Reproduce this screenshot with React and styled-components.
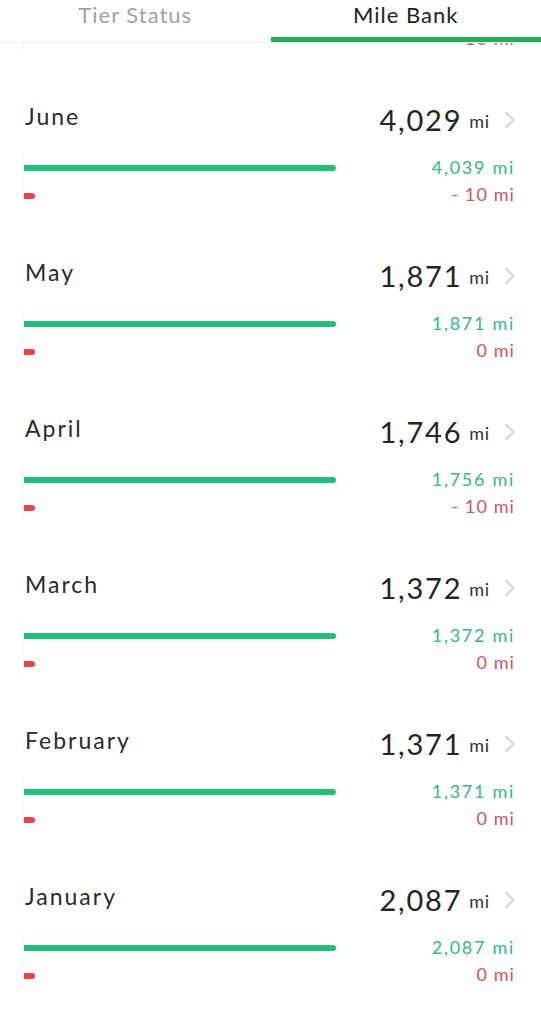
import React from "react";
import styled, { createGlobalStyle } from "styled-components";

const GlobalStyle = createGlobalStyle`
  html, body {
    margin: 0;
    padding: 0;
    background: #ffffff;
    font-family: "Lato", "Liberation Sans", sans-serif;
  }
`;

const Page = styled.div`
  width: 541px;
  height: 1024px;
  overflow: hidden;
  background: #fff;
`;

const TabBar = styled.div`
  position: sticky;
  top: 0;
  z-index: 2;
  display: flex;
  height: 42px;
  background: #fff;
  border-bottom: 1px solid #f3f3f3;
`;

const Tab = styled.div`
  flex: 1;
  display: flex;
  justify-content: center;
  padding-top: 1px;
  font-size: 22px;
  letter-spacing: 1px;
  color: ${p => (p.active ? "#222" : "#a2a2a2")};
  position: relative;
  &::after {
    content: "";
    display: ${p => (p.active ? "block" : "none")};
    position: absolute;
    left: 0;
    right: 0;
    bottom: 0;
    height: 5px;
    background: #1faf55;
  }
`;

const List = styled.div`
  margin-top: -111px;
`;

const Row = styled.div`
  height: 156px;
  padding: 0 25px 0 24px;
  box-sizing: border-box;
`;

const Head = styled.div`
  display: flex;
  align-items: center;
  justify-content: space-between;
  height: 66px;
`;

const Month = styled.div`
  font-size: 23px;
  letter-spacing: 2px;
  color: #2a2a2a;
  margin-top: -10px;
  margin-left: 1px;
`;

const Total = styled.div`
  display: flex;
  align-items: center;
  color: #242424;
  margin-top: -4px;
`;

const Big = styled.span`
  font-size: 29px;
  letter-spacing: 1.8px;
`;

const Unit = styled.span`
  font-size: 18px;
  letter-spacing: 0.8px;
  margin-left: 7px;
  margin-top: 4px;
  color: #333;
`;

const Chevron = styled.svg`
  width: 12px;
  height: 18px;
  margin-left: 14px;
  margin-top: 2px;
`;

const Chart = styled.div`
  display: flex;
  flex-direction: column;
  gap: 2px;
`;

const Line = styled.div`
  display: flex;
  align-items: center;
  justify-content: space-between;
  height: 25px;
`;

const Track = styled.div`
  width: 312px;
  height: 25px;
  display: flex;
  align-items: center;
  border-left: 1px solid #f5f5f5;
  margin-left: -1px;
`;

const Bar = styled.div`
  height: 6px;
  border-radius: 0 3px 3px 0;
  background: ${p => p.color};
  margin-top: ${p => p.shift || 0}px;
`;

const Amount = styled.div`
  font-size: 18px;
  letter-spacing: ${p => p.spacing}px;
  color: ${p => p.color};
  margin-right: 1px;
`;

const GREEN = "#1cc27a";
const GREEN_TEXT = "#35b886";
const RED = "#ea4248";
const RED_TEXT = "#d5535b";

const months = [
  { name: "July", total: "4,029", earned: "4,039", spent: "- 10", ratio: 1 },
  { name: "June", total: "4,029", earned: "4,039", spent: "- 10", ratio: 1 },
  { name: "May", total: "1,871", earned: "1,871", spent: "0", ratio: 1 },
  { name: "April", total: "1,746", earned: "1,756", spent: "- 10", ratio: 1 },
  { name: "March", total: "1,372", earned: "1,372", spent: "0", ratio: 1 },
  { name: "February", total: "1,371", earned: "1,371", spent: "0", ratio: 1 },
  { name: "January", total: "2,087", earned: "2,087", spent: "0", ratio: 1 },
];

const MonthRow = ({ m }) => (
  <Row>
    <Head>
      <Month>{m.name}</Month>
      <Total>
        <Big>{m.total}</Big>
        <Unit>mi</Unit>
        <Chevron viewBox="0 0 12 18">
          <path d="M2 2 L9.5 9 L2 16" fill="none" stroke="#dadada" strokeWidth="2.4" strokeLinecap="round" strokeLinejoin="round" />
        </Chevron>
      </Total>
    </Head>
    <Chart>
      <Line>
        <Track>
          <Bar color={GREEN} shift={3} style={{ width: `${m.ratio * 100}%` }} />
        </Track>
        <Amount color={GREEN_TEXT} spacing={1.7}>{m.earned} mi</Amount>
      </Line>
      <Line>
        <Track>
          <Bar color={RED} shift={4} style={{ width: "11px" }} />
        </Track>
        <Amount color={RED_TEXT} spacing={1.1}>{m.spent} mi</Amount>
      </Line>
    </Chart>
  </Row>
);

export default function App() {
  return (
    <Page>
      <GlobalStyle />
      <TabBar>
        <Tab>Tier Status</Tab>
        <Tab active>Mile Bank</Tab>
      </TabBar>
      <List>
        {months.map(m => (
          <MonthRow key={m.name} m={m} />
        ))}
      </List>
    </Page>
  );
}
